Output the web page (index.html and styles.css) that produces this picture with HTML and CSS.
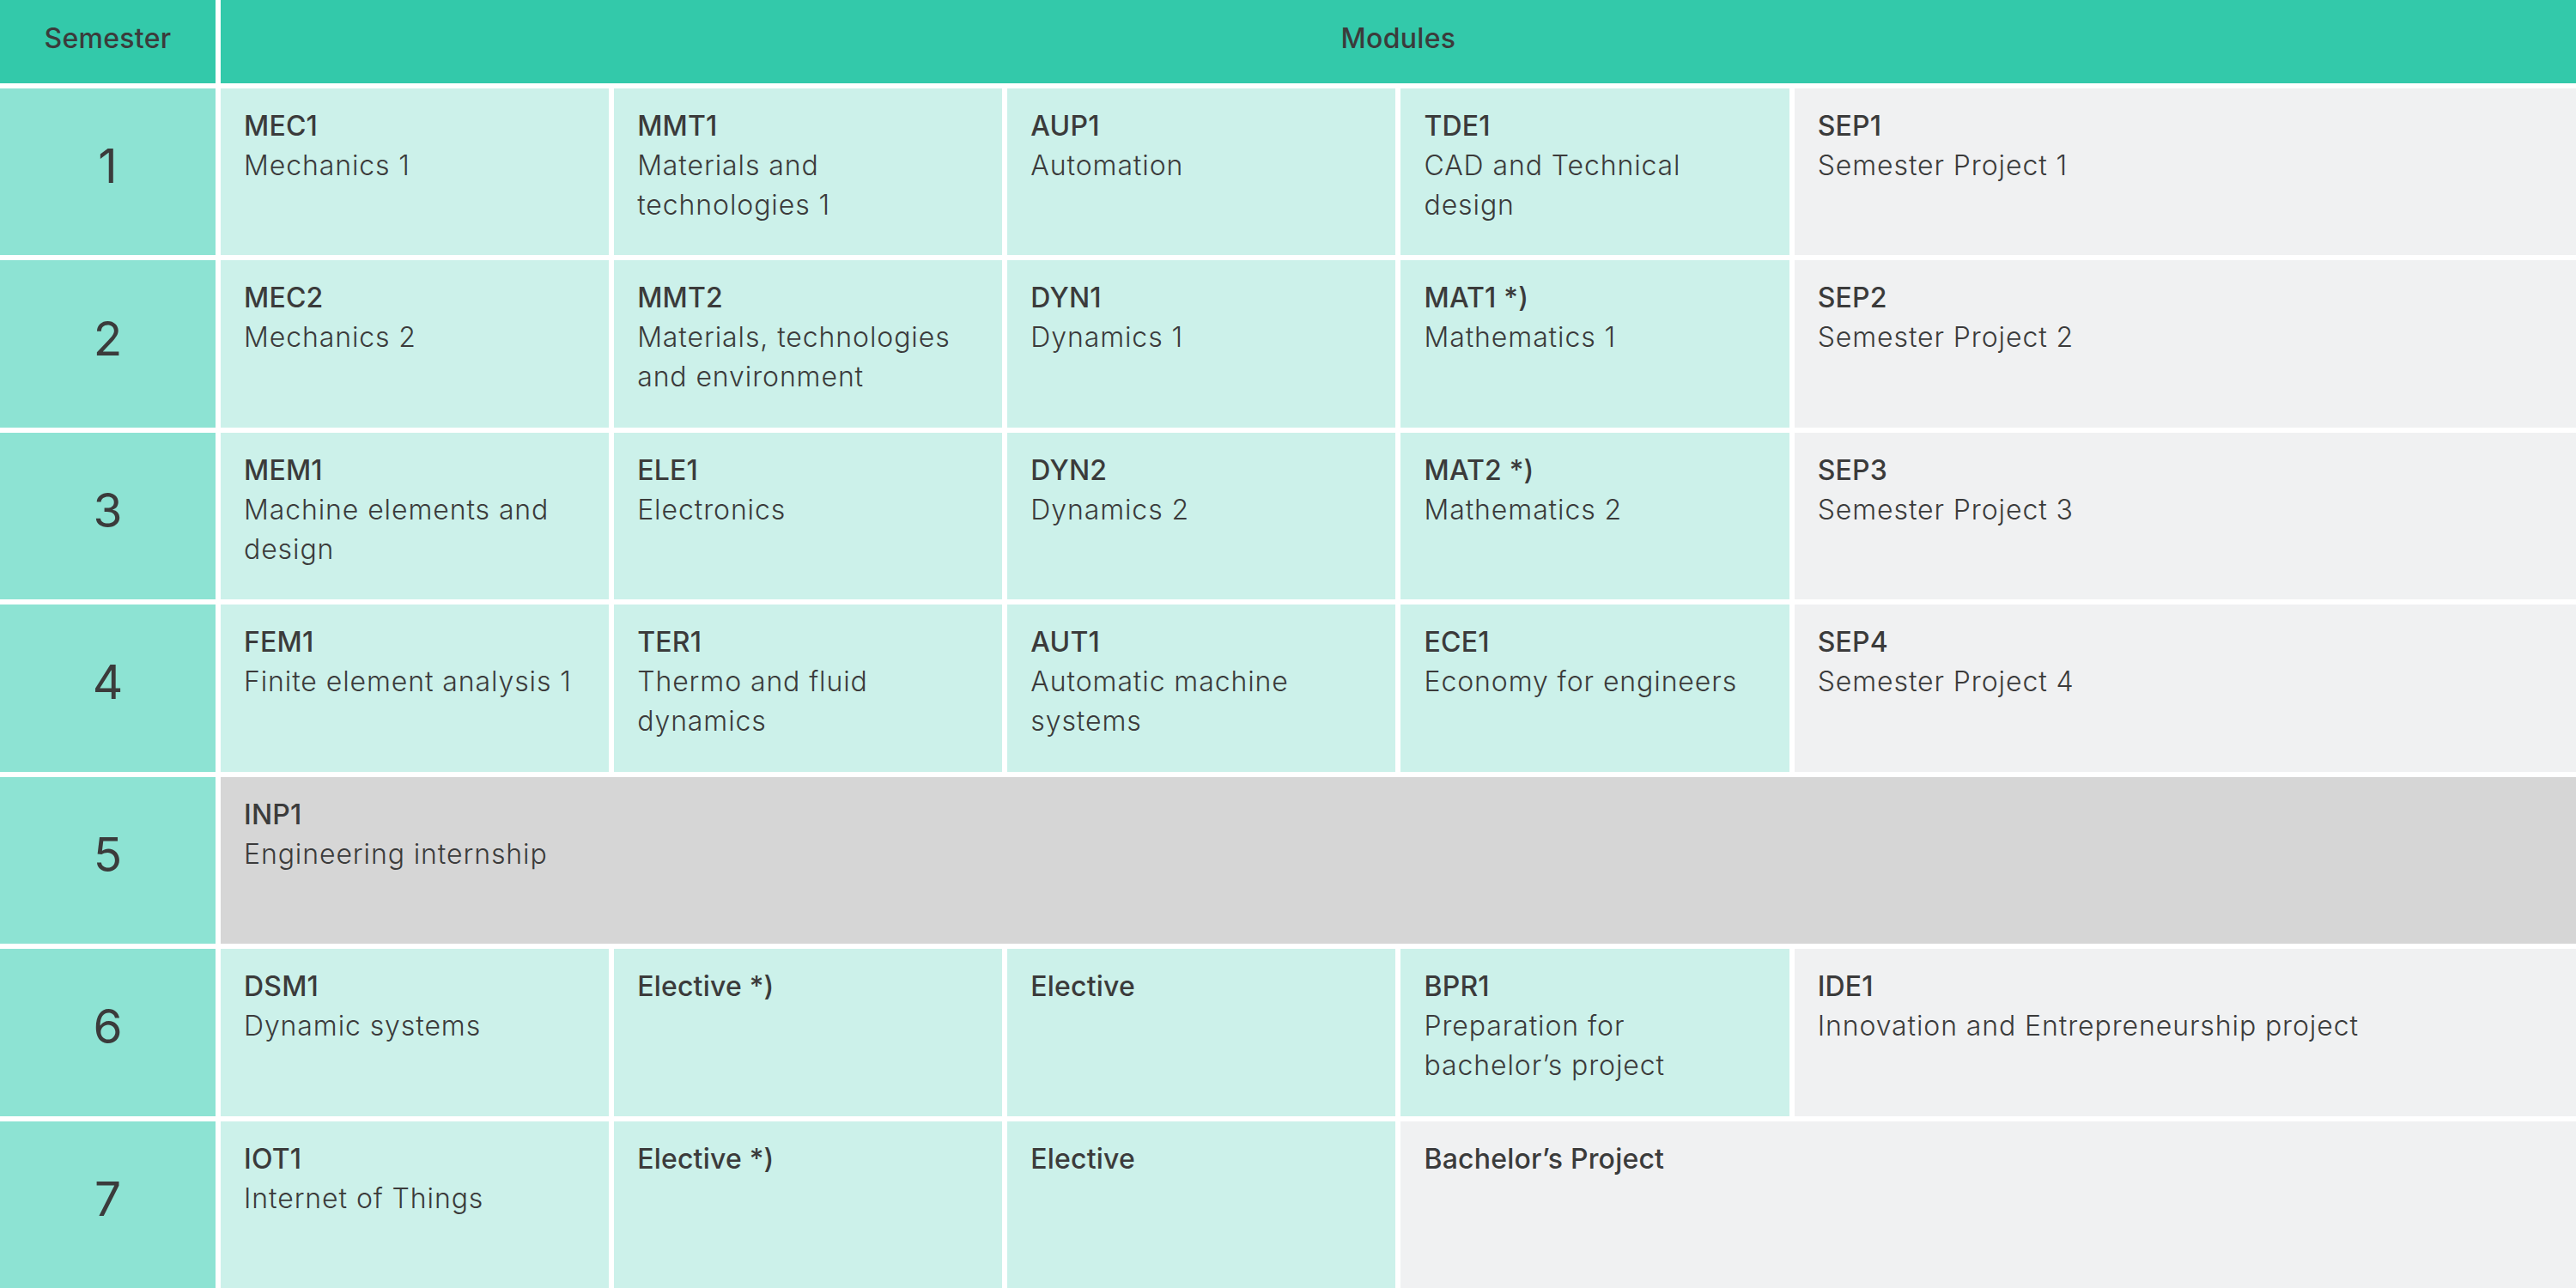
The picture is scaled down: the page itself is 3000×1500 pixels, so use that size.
FILE: index.html
```html
<!DOCTYPE html>
<html lang="en">
<head>
<meta charset="utf-8">
<title>Modules</title>
<link rel="stylesheet" href="styles.css">
</head>
<body>
<div class="plan">
  <div class="head head-sem">Semester</div>
  <div class="head head-mod">Modules</div>

  <div class="sem">1</div>
  <div class="mod"><div class="code">MEC1</div><div class="name">Mechanics 1</div></div>
  <div class="mod"><div class="code">MMT1</div><div class="name">Materials and technologies 1</div></div>
  <div class="mod"><div class="code">AUP1</div><div class="name">Automation</div></div>
  <div class="mod"><div class="code">TDE1</div><div class="name">CAD and Technical design</div></div>
  <div class="mod proj span2"><div class="code">SEP1</div><div class="name">Semester Project 1</div></div>

  <div class="sem">2</div>
  <div class="mod"><div class="code">MEC2</div><div class="name">Mechanics 2</div></div>
  <div class="mod"><div class="code">MMT2</div><div class="name">Materials, technologies and environment</div></div>
  <div class="mod"><div class="code">DYN1</div><div class="name">Dynamics 1</div></div>
  <div class="mod"><div class="code">MAT1 *)</div><div class="name">Mathematics 1</div></div>
  <div class="mod proj span2"><div class="code">SEP2</div><div class="name">Semester Project 2</div></div>

  <div class="sem">3</div>
  <div class="mod"><div class="code">MEM1</div><div class="name">Machine elements and design</div></div>
  <div class="mod"><div class="code">ELE1</div><div class="name">Electronics</div></div>
  <div class="mod"><div class="code">DYN2</div><div class="name">Dynamics 2</div></div>
  <div class="mod"><div class="code">MAT2 *)</div><div class="name">Mathematics 2</div></div>
  <div class="mod proj span2"><div class="code">SEP3</div><div class="name">Semester Project 3</div></div>

  <div class="sem">4</div>
  <div class="mod"><div class="code">FEM1</div><div class="name">Finite element analysis 1</div></div>
  <div class="mod"><div class="code">TER1</div><div class="name">Thermo and fluid dynamics</div></div>
  <div class="mod"><div class="code">AUT1</div><div class="name">Automatic machine systems</div></div>
  <div class="mod"><div class="code">ECE1</div><div class="name">Economy for engineers</div></div>
  <div class="mod proj span2"><div class="code">SEP4</div><div class="name">Semester Project 4</div></div>

  <div class="sem">5</div>
  <div class="mod intern span6"><div class="code">INP1</div><div class="name">Engineering internship</div></div>

  <div class="sem">6</div>
  <div class="mod"><div class="code">DSM1</div><div class="name">Dynamic systems</div></div>
  <div class="mod"><div class="code">Elective *)</div></div>
  <div class="mod"><div class="code">Elective</div></div>
  <div class="mod"><div class="code">BPR1</div><div class="name">Preparation for bachelor’s project</div></div>
  <div class="mod proj span2"><div class="code">IDE1</div><div class="name">Innovation and Entrepreneurship project</div></div>

  <div class="sem">7</div>
  <div class="mod"><div class="code">IOT1</div><div class="name">Internet of Things</div></div>
  <div class="mod"><div class="code">Elective *)</div></div>
  <div class="mod"><div class="code">Elective</div></div>
  <div class="mod proj span3"><div class="code">Bachelor’s Project</div></div>
</div>
</body>
</html>
```

FILE: styles.css
```css
html, body {
  margin: 0;
  padding: 0;
  background: #ffffff;
}

body {
  font-family: Inter, "Noto Sans", "Liberation Sans", sans-serif;
  color: #3b3b3b;
}

.plan {
  display: grid;
  grid-template-columns: 251px repeat(6, 1fr);
  grid-template-rows: 97px repeat(7, 1fr);
  gap: 6px;
  width: 3000px;
  height: 1500px;
  overflow: hidden;
}

.head {
  background: #33c9aa;
  display: flex;
  align-items: center;
  justify-content: center;
  font-size: 32px;
  font-weight: 450;
  letter-spacing: 0.3px;
  padding-bottom: 8px;
  box-sizing: border-box;
}

.head-mod {
  grid-column: span 6;
}

.sem {
  background: #8de3d3;
  display: flex;
  align-items: center;
  justify-content: center;
  font-size: 55px;
  font-weight: 400;
  padding-bottom: 14px;
  box-sizing: border-box;
}

.mod {
  background: #ccf1ea;
  padding: 21px 27px 0 27px;
  box-sizing: border-box;
  font-size: 32px;
  line-height: 46px;
}

.code {
  font-weight: 500;
  letter-spacing: 0.2px;
}

.name {
  font-weight: 300;
  letter-spacing: 0.9px;
}

.proj {
  background: #f0f1f2;
}

.intern {
  background: #d6d6d6;
}

.span2 { grid-column: span 2; }
.span3 { grid-column: span 3; }
.span6 { grid-column: span 6; }
```
